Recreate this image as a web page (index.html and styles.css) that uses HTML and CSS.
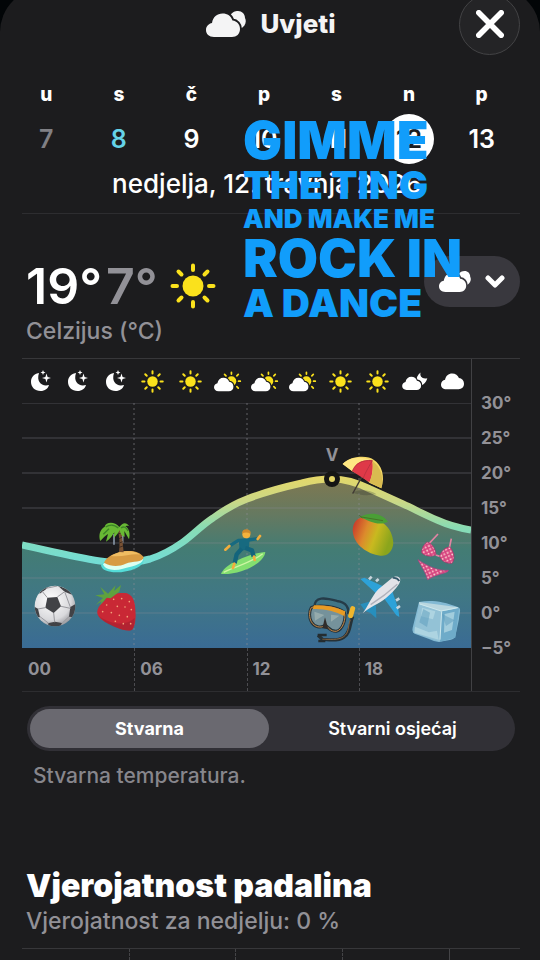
FILE: index.html
```html
<!DOCTYPE html>
<html lang="hr">
<head>
    <meta charset="UTF-8">
    <meta name="viewport" content="width=device-width, initial-scale=1.0">
    <title>Uvjeti</title>
    <link rel="stylesheet" href="styles.css">
</head>
<body>
    <!-- shared weather icons -->
    <svg class="icon-defs" aria-hidden="true">
        <defs>
            <path id="cloud-shape" d="M8 26C3 26 0 23 0 19C0 15 3 12.500 6 12C7 6 11 2.500 16.500 2.500C21.500 2.500 25 5 26.500 9.500C31 10 34 13.500 34 18C34 23 30.500 26 26 26Z"/>
            <mask id="behind-cloud" maskUnits="userSpaceOnUse" x="-5" y="-12" width="60" height="50">
                <rect x="-5" y="-12" width="60" height="50" fill="#fff"/>
                <use href="#cloud-shape" fill="#000" stroke="#000" stroke-width="4"/>
            </mask>
            <symbol id="clouds" viewBox="0 0 40 26">
                <use href="#cloud-shape"/>
                <path d="M24 5C26 1 29 0 32 0C36 0 39 3 39 7C41 11 39 16 34 18L26 18Z" mask="url(#behind-cloud)"/>
            </symbol>
            <symbol id="cloud" viewBox="0 2 34 25">
                <use href="#cloud-shape"/>
            </symbol>
            <symbol id="sun" viewBox="0 0 46 46">
                <circle cx="23" cy="23" r="10.500"/>
                <g stroke="currentColor" stroke-width="4" stroke-linecap="round">
                    <path d="M23 2.500V7M23 39V43.500M2.500 23H7M39 23H43.500M8.500 8.500L11.500 11.500M34.500 34.500L37.500 37.500M8.500 37.500L11.500 34.500M34.500 11.500L37.500 8.500"/>
                </g>
            </symbol>
            <symbol id="moon" viewBox="0 0 20 22">
                <path d="M8 3C2 4 0 8 0 12C0 17 4 21 9.500 21C14 21 17 18.500 18 15C11 17 5 12 8 3Z"/>
                <path d="M15.500 3.500L16.600 7L20 8L16.600 9.100L15.500 12.500L14.400 9.100L11 8L14.400 7ZM12 0L12.700 1.800L14.500 2.500L12.700 3.200L12 5L11.300 3.200L9.500 2.500L11.300 1.800Z"/>
            </symbol>
            <symbol id="cloud-sun" viewBox="0 -9 49 36">
                <g class="sun-part" mask="url(#behind-cloud)">
                    <circle cx="30.500" cy="8.500" r="8.500"/>
                    <path d="M30.500 -7V-4M43 8.500H46M18.500 -3.500L21 -1M42.500 -3.500L40 -1M40 18L42.500 20.500" stroke="currentColor" stroke-width="3" stroke-linecap="round"/>
                </g>
                <use href="#cloud-shape"/>
            </symbol>
            <symbol id="cloud-moon" viewBox="0 -6 46 34">
                <path d="M33 -5C31 2 36 7 45 5C43 12 39 16 34 18L25 12C25 5 28 -2 33 -5Z" mask="url(#behind-cloud)"/>
                <use href="#cloud-shape"/>
            </symbol>
        </defs>
    </svg>

    <main class="sheet">
        <header class="header">
            <h1 class="header-title">
                <svg class="title-icon" aria-hidden="true"><use href="#clouds"/></svg>
                Uvjeti
            </h1>
            <button class="close-button" aria-label="Zatvori">
                <svg viewBox="0 0 30 30" aria-hidden="true"><path d="M3 3L27 27M27 3L3 27"/></svg>
            </button>
        </header>

        <nav class="days">
            <button class="day past"><span>u</span><b>7</b></button>
            <button class="day today"><span>s</span><b>8</b></button>
            <button class="day"><span>č</span><b>9</b></button>
            <button class="day"><span>p</span><b>10</b></button>
            <button class="day"><span>s</span><b>11</b></button>
            <button class="day selected"><span>n</span><b>12</b></button>
            <button class="day"><span>p</span><b>13</b></button>
            <button class="day"><span>u</span><b>14</b></button>
        </nav>
        <p class="date">nedjelja, 12. travnja 2026</p>

        <section class="summary">
            <div>
                <div class="temps">
                    <span>19°</span><span class="low">7°</span>
                    <svg class="temps-icon" aria-hidden="true"><use href="#sun"/></svg>
                </div>
                <p class="subtitle">Celzijus (°C)</p>
            </div>
            <button class="picker" aria-haspopup="menu" aria-label="Uvjeti">
                <svg class="picker-icon" aria-hidden="true"><use href="#clouds"/></svg>
                <svg class="chevron" viewBox="0 0 20 14" aria-hidden="true"><path d="M3 3L10 10L17 3"/></svg>
            </button>
        </section>

        <section class="chart">
            <div class="chart-main">
                <div class="hour-icons">
                    <svg class="moon"><use href="#moon"/></svg>
                    <svg class="moon"><use href="#moon"/></svg>
                    <svg class="moon"><use href="#moon"/></svg>
                    <svg class="sun"><use href="#sun"/></svg>
                    <svg class="sun"><use href="#sun"/></svg>
                    <svg class="cloud-sun"><use href="#cloud-sun"/></svg>
                    <svg class="cloud-sun"><use href="#cloud-sun"/></svg>
                    <svg class="cloud-sun"><use href="#cloud-sun"/></svg>
                    <svg class="sun"><use href="#sun"/></svg>
                    <svg class="sun"><use href="#sun"/></svg>
                    <svg class="cloud-moon"><use href="#cloud-moon"/></svg>
                    <svg class="cloud"><use href="#cloud"/></svg>
                </div>

                <svg class="plot" viewBox="0 0 449 245" role="img" aria-label="Temperatura po satima">
                    <defs>
                        <linearGradient id="area-fill" gradientUnits="userSpaceOnUse" x1="0" y1="76" x2="0" y2="245">
                            <stop offset="0" stop-color="#7f7850"/>
                            <stop offset=".22" stop-color="#647961"/>
                            <stop offset=".42" stop-color="#437c74"/>
                            <stop offset=".7" stop-color="#407785"/>
                            <stop offset="1" stop-color="#3a6b94"/>
                        </linearGradient>
                        <linearGradient id="line-stroke" gradientUnits="userSpaceOnUse" x1="0" y1="72" x2="0" y2="160">
                            <stop offset="0" stop-color="#e6d767"/>
                            <stop offset=".3" stop-color="#cbd886"/>
                            <stop offset=".6" stop-color="#88dcb4"/>
                            <stop offset="1" stop-color="#73ddd5"/>
                        </linearGradient>
                        <linearGradient id="mango" x1="0" y1="0" x2="1" y2=".35">
                            <stop offset=".05" stop-color="#c9352b"/>
                            <stop offset=".4" stop-color="#dc8a2c"/>
                            <stop offset=".65" stop-color="#c9b91f"/>
                            <stop offset="1" stop-color="#8ba51c"/>
                        </linearGradient>
                        <radialGradient id="ball" cx=".4" cy=".35" r=".7">
                            <stop offset="0" stop-color="#fff"/>
                            <stop offset=".7" stop-color="#d9d9dc"/>
                            <stop offset="1" stop-color="#929297"/>
                        </radialGradient>
                        <clipPath id="ball-clip"><circle cx="165" cy="318" r="61"/></clipPath>
                        <pattern id="dots" width="15" height="15" patternUnits="userSpaceOnUse" patternTransform="rotate(20)">
                            <rect width="15" height="15" fill="#d6437f"/>
                            <circle cx="4" cy="4" r="3" fill="#ffe0d8"/>
                            <circle cx="11" cy="11" r="3" fill="#ffc9cd"/>
                        </pattern>
                    </defs>

                    <path fill="url(#area-fill)" d="M0 142C28 148 52 154 78 158C97 161 113 160 128 156C141 152 151 146 161 139C172 131 180 122 191 115C202 107 212 101 225 96C243 89 262 84 280 80C291 77 300 76 310 76C324 76 336 80 348 86C359 91 370 96 381 101C392 106 403 112 415 117C426 122 437 125 449 127V245H0Z"/>
                    <path class="grid-line" d="M0 0H449M0 35H449M0 70H449M0 105H449M0 140H449M0 175H449M0 210H449"/>
                    <path class="grid-dash" d="M112 0V245M225 0V245M337 0V245"/>
                    <path class="curve" stroke="url(#line-stroke)" d="M0 142C28 148 52 154 78 158C97 161 113 160 128 156C141 152 151 146 161 139C172 131 180 122 191 115C202 107 212 101 225 96C243 89 262 84 280 80C291 77 300 76 310 76C324 76 336 80 348 86C359 91 370 96 381 101C392 106 403 112 415 117C426 122 437 125 449 127"/>
                    <circle cx="310" cy="76" r="8" fill="#151514"/>
                    <circle cx="310" cy="76" r="3" fill="#e6d767"/>
                    <text class="peak" x="310" y="58" text-anchor="middle">V</text>

                    <!-- football -->
                    <g transform="translate(-22 97) scale(.3333)">
                        <circle cx="165" cy="318" r="61" fill="url(#ball)"/>
                        <g clip-path="url(#ball-clip)" fill="#414246">
                            <path d="M142 293L172 291L183 319L161 339L136 323Z"/>
                            <path d="M172 256L208 270L216 284L194 275ZM230 310L211 321L207 350L224 352ZM103 320L114 326L120 352L106 350ZM143 370L165 365L186 369L178 384L150 384ZM124 268L149 256L138 268L118 282Z"/>
                            <path d="M142 293L125 272M172 291L194 275M183 319L211 325M161 339L164 367M136 323L114 327M194 275L211 321M138 265L172 258M120 350L146 370M186 370L207 350" fill="none" stroke="#98989d" stroke-width="3"/>
                        </g>
                    </g>

                    <!-- island and strawberry -->
                    <g transform="translate(68 107) scale(.3333)">
                        <path d="M33 166C44 143 127 128 160 146C172 183 39 206 33 166Z" fill="#55dcd8"/>
                        <path d="M39 163C44 151 139 140 160 147C156 166 118 170 99 176C75 183 45 181 39 163Z" fill="#dcfff1"/>
                        <path d="M42 158C54 126 139 107 161 142C159 158 128 153 107 161C87 170 65 171 42 158Z" fill="#d79b43"/>
                        <path d="M62 138C89 120 130 117 150 134C126 128 102 143 62 138Z" fill="#f0bd62"/>
                        <path d="M72 72V104M98 70V98" stroke="#8593a3" stroke-width="5"/>
                        <path d="M82 54Q92 90 87 126L101 127Q97 91 94 54Z" fill="#765033"/>
                        <path d="M85 72L94 69M87 86L96 82M88 99L98 95M88 112L99 108" stroke="#3d2b21" stroke-width="3"/>
                        <path d="M88 51C72 32 47 37 44 50C29 58 25 78 31 93C40 84 47 76 54 72L48 95C61 87 68 75 73 67L71 84C81 75 86 66 89 60C91 73 96 80 104 80L103 63L117 88C122 72 117 54 106 49C117 45 119 50 119 50C108 35 99 37 88 51Z" fill="#68b934"/>
                        <path d="M47 51C60 42 75 45 85 54M93 54C101 48 109 51 114 63M40 73L57 56" stroke="#3d8428" stroke-width="4" fill="none"/>
                        <path d="M22 303C25 286 37 281 47 266C61 251 92 247 111 250C135 259 136 286 137 317C136 339 133 357 123 361C99 365 69 348 46 336C29 326 20 316 22 303Z" fill="#c92835"/>
                        <path d="M26 318C62 343 105 351 134 324C134 342 131 358 123 361C98 363 64 347 44 335Z" fill="#9c1d2d" opacity=".5"/>
                        <g fill="#f3a37a"><circle cx="50" cy="285" r="2.500"/><circle cx="71" cy="268" r="2.500"/><circle cx="95" cy="266" r="2.500"/><circle cx="118" cy="275" r="2.500"/><circle cx="82" cy="289" r="2.500"/><circle cx="105" cy="291" r="2.500"/><circle cx="124" cy="299" r="2.500"/><circle cx="38" cy="305" r="2.500"/><circle cx="64" cy="308" r="2.500"/><circle cx="88" cy="316" r="2.500"/><circle cx="112" cy="320" r="2.500"/><circle cx="76" cy="334" r="2.500"/><circle cx="100" cy="341" r="2.500"/><circle cx="122" cy="341" r="2.500"/></g>
                        <path d="M17 285L39 264L16 256L43 253L31 231L54 251L77 226L72 243L93 225L88 245L62 265L50 263L30 286L35 274Z" fill="#5fa13e"/>
                    </g>

                    <!-- surfer -->
                    <g transform="translate(188 117) scale(.3333)">
                        <path d="M33 162C45 129 128 98 166 96C163 129 93 166 33 162Z" fill="#83df70"/>
                        <path d="M41 157C70 142 125 128 158 101" fill="none" stroke="#d0f6a5" stroke-width="4"/>
                        <path d="M60 77L85 61L115 60L143 56" fill="none" stroke="#176a80" stroke-width="10" stroke-linejoin="round"/>
                        <path d="M86 58L119 58L116 88L89 93Z" fill="#176a80"/>
                        <path d="M95 86L80 103L74 130M106 84L126 91L131 110" fill="none" stroke="#13647c" stroke-width="13" stroke-linejoin="round"/>
                        <circle cx="109" cy="43" r="12" fill="#f4b23d"/>
                        <path d="M96 41Q96 27 112 28Q124 31 122 42Q109 34 96 41Z" fill="#d08a2c"/>
                        <path d="M58 78L46 89M143 57L150 48M73 131L69 144M132 110L134 120" stroke="#f2ad3d" stroke-width="8" stroke-linecap="round"/>
                    </g>

                    <!-- parasol and mango -->
                    <g transform="translate(278 37) scale(.3333)">
                        <path d="M156 157Q198 142 230 163Q182 170 156 157Z" fill="#292c26" opacity=".25"/>
                        <path d="M188 106L158 161" stroke="#423b35" stroke-width="4"/>
                        <path d="M128 72C148 48 202 43 222 60C244 74 257 108 244 145L209 129L182 106L157 94Z" fill="#f5d866"/>
                        <path d="M157 94C163 69 187 50 217 62C220 85 216 111 208 127Z" fill="#df3948"/>
                        <path d="M217 62C242 80 252 108 244 145L208 127C218 105 222 82 217 62Z" fill="#d9bb50"/>
                        <path d="M217 62C185 49 150 50 128 72L157 94C164 72 184 57 217 62Z" fill="#ffe783"/>
                        <path d="M157 94C165 71 187 59 217 62C203 86 193 104 190 115" fill="none" stroke="#bd3340" stroke-width="3"/>
                        <path d="M158 269C160 243 175 230 202 230C241 235 278 260 280 309C278 336 260 350 241 347C204 342 159 315 158 269Z" fill="url(#mango)"/>
                        <path d="M180 231C209 216 243 217 264 245C236 259 209 244 180 231Z" fill="#4a9f36"/>
                        <path d="M184 231L249 242M178 226L187 234" stroke="#477527" stroke-width="3"/>
                    </g>

                    <!-- diving mask and plane -->
                    <g transform="translate(278 162) scale(.3333)">
                        <path d="M43 127C43 93 75 98 111 108C141 112 148 131 144 148" fill="none" stroke="#253b48" stroke-width="7"/>
                        <path d="M34 128C54 117 115 125 133 142C139 160 129 194 109 199C90 200 86 187 76 181C62 191 43 186 34 170C27 158 27 139 34 128Z" fill="#75929b" stroke="#25333a" stroke-width="9"/>
                        <path d="M34 128C54 117 115 125 133 142C139 160 129 194 109 199C90 200 86 187 76 181C62 191 43 186 34 170C27 158 27 139 34 128Z" fill="none" stroke="#c88946" stroke-width="3"/>
                        <path d="M42 121Q92 119 136 139L133 153Q87 129 38 132Z" fill="#e89b24"/>
                        <path d="M43 140L73 150L45 167ZM93 149L118 152L93 170Z" fill="#a4b6b4" opacity=".7"/>
                        <path d="M75 157L67 190L85 193Z" fill="#302d2b"/>
                        <path d="M158 154C149 175 152 204 131 217C112 230 88 224 67 223L54 211" fill="none" stroke="#263136" stroke-width="10" stroke-linejoin="round"/>
                        <path d="M151 164C143 185 148 203 131 215C113 227 90 222 67 223" fill="none" stroke="#ba7e45" stroke-width="2"/>
                        <path d="M152 152L158 131" stroke="#f0b62d" stroke-width="15" stroke-linecap="round"/>
                        <path d="M53 210H80M55 228H76" stroke="#242c2f" stroke-width="7"/>
                        <path d="M181 42L193 38L249 64L231 88ZM274 70L253 101L289 151L298 156L295 132Z" fill="#2da2d8"/>
                        <path d="M181 118L207 110L228 122L229 160L211 144L195 137Z" fill="#278fbd"/>
                        <path d="M188 145C207 121 212 98 235 73L276 39C286 30 305 34 300 50C295 65 277 82 259 98C233 119 211 124 188 145Z" fill="#e2e3e8"/>
                        <path d="M212 119Q255 92 292 58" fill="none" stroke="#aeb1bb" stroke-width="4"/>
                        <path d="M278 39Q291 37 298 48" fill="none" stroke="#33576a" stroke-width="5"/>
                        <path d="M207 43L215 35M228 49L236 42M288 107L298 100M290 130L300 123" stroke="#c8d5dc" stroke-width="8"/>
                    </g>

                    <!-- bikini and ice -->
                    <g transform="translate(383 117) scale(.3333)">
                        <path d="M70 73L99 42M133 84L139 56M92 105L105 109" fill="none" stroke="#e184a3" stroke-width="5"/>
                        <path d="M66 66C80 70 91 84 93 104C77 113 58 107 50 98C50 84 56 74 66 66ZM135 81C149 99 150 119 141 130C122 131 109 123 104 109C109 92 121 82 135 81Z" fill="url(#dots)" stroke="#a93469" stroke-width="2"/>
                        <path d="M39 119C70 141 103 153 130 151C131 160 98 160 68 179C62 156 49 140 39 119Z" fill="url(#dots)" stroke="#b93e83" stroke-width="2"/>
                        <path d="M42 246C74 240 111 242 160 262C170 267 163 281 162 297L151 349Q147 359 130 361L101 366Q88 365 72 357L29 341Q20 335 23 323Z" fill="#83bad4"/>
                        <path d="M42 246L160 262Q137 274 110 274L43 255Z" fill="#bad7df"/>
                        <path d="M43 253L110 274L105 365L25 338Z" fill="#93c2d6"/>
                        <path d="M110 274L162 265L151 353L105 365Z" fill="#6eabc9"/>
                        <path d="M51 263L91 274L84 298L48 289ZM119 282L149 275L141 330L117 338ZM30 320L72 337L96 332L101 359L29 338Z" fill="#b8dbe5" opacity=".7"/>
                        <path d="M55 267L43 307L66 321L75 278ZM111 282L123 318L149 301" fill="#5b9cbc" opacity=".5"/>
                        <path d="M44 252L108 273L158 263M110 274L105 359" fill="none" stroke="#cde8ed" stroke-width="3"/>
                    </g>
                </svg>

                <div class="hours">
                    <span>00</span>
                    <span>06</span>
                    <span>12</span>
                    <span>18</span>
                </div>
            </div>
            <div class="degrees">
                <span>30°</span>
                <span>25°</span>
                <span>20°</span>
                <span>15°</span>
                <span>10°</span>
                <span>5°</span>
                <span>0°</span>
                <span>−5°</span>
            </div>
        </section>

        <div class="segments">
            <button class="segment active" aria-pressed="true">Stvarna</button>
            <button class="segment" aria-pressed="false">Stvarni osjećaj</button>
        </div>
        <p class="note">Stvarna temperatura.</p>

        <section class="rain">
            <h2>Vjerojatnost padalina</h2>
            <p class="subtitle">Vjerojatnost za nedjelju: 0 %</p>
            <div class="rain-chart">
                <i></i><i></i><i></i><i></i><i></i>
            </div>
        </section>

        <p class="lyrics">
            <span class="large">GIMME</span>
            <span class="medium">THE TING</span>
            <span class="small">AND MAKE ME</span>
            <span class="large">ROCK IN</span>
            <span class="medium">A DANCE</span>
        </p>
    </main>
</body>
</html>
```
FILE: styles.css
```css
* {
    margin: 0;
    padding: 0;
    box-sizing: border-box;
}

body {
    font-family: Inter, "Liberation Sans", sans-serif;
    background-color: #020507;
    color: #ffffff;
    overflow: hidden;
}

button {
    border: none;
    background: none;
    color: inherit;
    font-family: inherit;
    cursor: pointer;
}

svg {
    display: block;
    fill: currentColor;
}

.icon-defs {
    position: absolute;
    width: 0;
    height: 0;
}

.sheet {
    position: relative;
    min-height: calc(100vh + 12px);
    margin-top: -12px;
    padding: 12px 20px 0 22px;
    background-color: #1c1c1e;
    border-radius: 44px 44px 0 0;
}

/* header */
.header {
    display: grid;
    grid-template-columns: 1fr auto 1fr;
    grid-template-rows: 48px;
    align-items: center;
}

.header-title {
    grid-column: 2;
    display: flex;
    align-items: center;
    gap: 14px;
    font-size: 26px;
    line-height: 32px;
    font-weight: 800;
    color: #f4f4f5;
}

.title-icon {
    width: 40px;
    height: 26px;
}

.close-button {
    justify-self: end;
    display: flex;
    align-items: center;
    justify-content: center;
    width: 61px;
    height: 61px;
    border: 1px solid #434345;
    border-radius: 50%;
    background-color: #242426;
}

.close-button svg {
    width: 28px;
    height: 28px;
    stroke: currentColor;
    stroke-width: 6;
    stroke-linecap: round;
}

/* day picker, scrolls past the right edge */
.days {
    display: grid;
    grid-template-columns: repeat(8, calc((100% - 22px) / 7));
    margin: 34px -20px 0 -12px;
    overflow-x: auto;
    scrollbar-width: none;
}

.day {
    display: flex;
    flex-direction: column;
    align-items: center;
    gap: 6px;
}

.day span {
    font-size: 19px;
    line-height: 26px;
    font-weight: 800;
}

.day b {
    width: 50px;
    border-radius: 50%;
    font-size: 25px;
    line-height: 50px;
    font-weight: 600;
}

.past b {
    color: #808085;
}

.today b {
    color: #65d3e8;
}

.selected b {
    background-color: #ffffff;
    color: #1c1c1e;
}

.date {
    padding: 4px 8px 13px 0;
    border-bottom: 1px solid #2d2d30;
    font-size: 26px;
    line-height: 32px;
    font-weight: 500;
    text-align: center;
}

/* temperature summary */
.summary {
    display: flex;
    justify-content: space-between;
    align-items: flex-start;
    padding: 42px 0 12px 4px;
}

.temps {
    display: flex;
    align-items: center;
    font-size: 50px;
    line-height: 60px;
    font-weight: 600;
}

.low {
    margin-left: 4px;
    color: #929197;
}

.temps-icon {
    width: 46px;
    height: 46px;
    margin-left: 12px;
    color: #fae11c;
}

.subtitle {
    font-size: 23px;
    line-height: 30px;
    font-weight: 500;
    color: #929197;
}

.picker {
    display: flex;
    align-items: center;
    justify-content: center;
    gap: 14px;
    width: 96px;
    height: 51px;
    border-radius: 26px;
    background-color: #39383e;
}

.picker-icon {
    width: 32px;
    height: 21px;
}

.chevron {
    width: 20px;
    height: 14px;
    fill: none;
    stroke: currentColor;
    stroke-width: 5;
    stroke-linecap: round;
    stroke-linejoin: round;
}

/* temperature chart */
.chart {
    display: grid;
    grid-template-columns: 1fr 48px;
    border-top: 1px solid #37373a;
    border-bottom: 1px solid #2d2d30;
}

.chart-main {
    border-right: 1px solid #414144;
}

.hour-icons {
    display: grid;
    grid-template-columns: repeat(12, 1fr);
    place-items: center;
    height: 44px;
}

.moon {
    width: 20px;
    height: 22px;
}

.sun {
    width: 23px;
    height: 23px;
    color: #fae11c;
}

.cloud-sun {
    width: 28px;
    height: 21px;
}

.sun-part {
    color: #fae11c;
    fill: currentColor;
}

.cloud-moon {
    width: 26px;
    height: 19px;
}

.cloud {
    width: 23px;
    height: 17px;
}

.plot {
    width: 100%;
}

.grid-line {
    fill: none;
    stroke: #8e8e96;
    stroke-opacity: 0.2;
    stroke-width: 2;
}

.grid-dash {
    fill: none;
    stroke: #8e8e96;
    stroke-opacity: 0.3;
    stroke-width: 2;
    stroke-dasharray: 2 3;
}

.curve {
    fill: none;
    stroke-width: 7;
}

.peak {
    fill: #929197;
    font-size: 17px;
    font-weight: 700;
}

.hours {
    display: grid;
    grid-template-columns: repeat(4, 1fr);
}

.hours span,
.degrees span {
    font-size: 17px;
    font-weight: 700;
    color: #929197;
}

.hours span {
    padding-left: 5px;
    border-left: 1px dashed #4c4c50;
    line-height: 43px;
}

.hours span:first-child {
    border-left-color: transparent;
}

.degrees {
    display: flex;
    flex-direction: column;
    justify-content: space-between;
    padding: 34px 0 33px 9px;
}

.degrees span {
    line-height: 20px;
}

/* actual / feels like switch */
.segments {
    display: grid;
    grid-template-columns: 1fr 1fr;
    gap: 4px;
    margin: 14px 5px 0;
    padding: 3px;
    border-radius: 23px;
    background-color: #313036;
}

.segment {
    border-radius: 20px;
    font-size: 18px;
    line-height: 39px;
    font-weight: 600;
}

.active {
    background-color: #6a6970;
    font-weight: 700;
}

.note {
    padding: 11px;
    font-size: 21px;
    line-height: 28px;
    font-weight: 500;
    color: #87868c;
}

/* rain */
.rain {
    padding-top: 65px;
}

.rain h2 {
    padding-left: 4px;
    font-size: 32px;
    line-height: 40px;
    font-weight: 900;
}

.rain .subtitle {
    padding: 0 0 12px 4px;
}

.rain-chart {
    display: grid;
    grid-template-columns: repeat(4, 3fr) 2fr;
    height: 12px;
    border-top: 1px solid #37373a;
}

.rain-chart i {
    border-left: 1px dashed #444447;
}

.rain-chart i:first-child {
    border-left: none;
}

.rain-chart i:last-child {
    border-left-style: solid;
}

/* caption laid over the screen */
.lyrics {
    position: absolute;
    top: 128px;
    left: 243px;
    color: #119dfb;
    font-weight: 900;
    white-space: nowrap;
}

.lyrics span {
    display: block;
}

.large {
    font-size: 52px;
    line-height: 50px;
}

.medium {
    font-size: 39px;
    line-height: 38px;
}

.small {
    font-size: 26px;
    line-height: 30px;
}
```
